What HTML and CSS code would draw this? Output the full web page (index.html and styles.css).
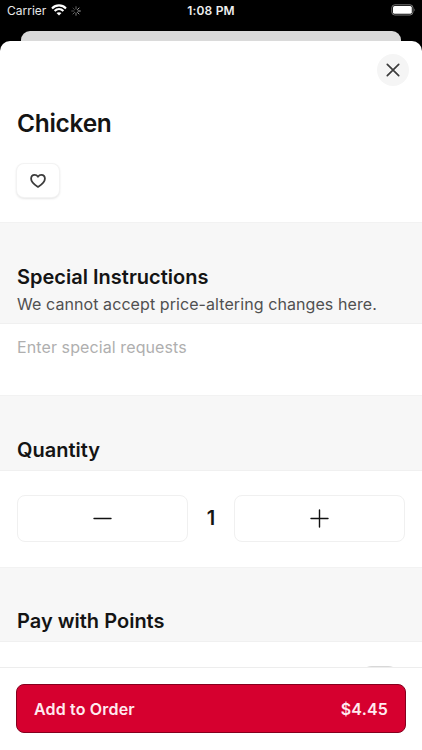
FILE: index.html
```html
<!DOCTYPE html>
<html lang="en">
<head>
<meta charset="utf-8">
<title>Chicken</title>
<link rel="stylesheet" href="styles.css">
</head>
<body>
<header class="status">
  <div class="status-left">
    <span class="carrier">Carrier</span>
    <svg class="wifi" width="16" height="12" viewBox="0 0 16 12" fill="none" stroke="#fff" stroke-width="2.1"><path d="M1 4.4C5 .4 11 .4 15 4.4M3.6 7C6.2 4.5 9.8 4.5 12.4 7"/><path d="M5.5 9.1C6.9 7.8 9.1 7.8 10.5 9.1L8 11.6Z" fill="#fff" stroke="none"/></svg>
    <svg class="spinner" width="10" height="10" viewBox="0 0 10 10" stroke="#fff" stroke-width=".9" stroke-linecap="round"><path d="M5 .7V3" opacity=".45"/><path d="M8 2 6.5 3.5" opacity=".7"/><path d="M9.3 5H7" opacity=".75"/><path d="M8 8 6.5 6.5" opacity=".65"/><path d="M5 9.3V7" opacity=".55"/><path d="M2 8 3.5 6.5" opacity=".45"/><path d="M.7 5H3" opacity=".35"/><path d="M2 2 3.5 3.5" opacity=".3"/></svg>
  </div>
  <time class="clock">1:08 PM</time>
  <svg class="battery" width="26" height="12" viewBox="0 0 26 12"><rect x=".8" y=".8" width="21.2" height="10.2" rx="3" fill="none" stroke="#777" stroke-width="1"/><rect x="2" y="2" width="18.8" height="7.8" rx="1.6" fill="#fff"/><path d="M23.3 4.2Q24.8 5.9 23.3 7.6Z" fill="#777"/></svg>
</header>
<div class="back-card"></div>
<main class="sheet">
  <section class="hero">
    <button class="close" aria-label="Close"><svg width="14" height="14" viewBox="0 0 14 14" fill="none" stroke="#3c3c3c" stroke-width="1.7" stroke-linecap="round"><path d="M1.3 1.3 12.7 12.7M12.7 1.3 1.3 12.7"/></svg></button>
    <h1 class="title">Chicken</h1>
    <button class="favorite" aria-label="Favorite"><svg width="16" height="15" viewBox="0 0 16 15" fill="none" stroke="#3c3c3c" stroke-width="1.8" stroke-linejoin="round"><path transform="translate(0 1)" d="M8 2.7C6.9 1.2 5.8.9 4.7.9 2.6.9 1.1 2.5 1.1 4.7 1.1 8 4.3 10.6 8 12.9 11.7 10.6 14.9 8 14.9 4.7 14.9 2.5 13.4.9 11.3.9 10.2.9 9.1 1.2 8 2.7Z"/></svg></button>
  </section>
  <section class="band instructions">
    <h2>Special Instructions</h2>
    <p class="note">We cannot accept price-altering changes here.</p>
  </section>
  <div class="request">Enter special requests</div>
  <section class="band quantity"><h2>Quantity</h2></section>
  <div class="stepper">
    <button class="step" aria-label="Decrease"><svg width="19" height="19" viewBox="0 0 19 19" stroke="#111" stroke-width="1.4" stroke-linecap="round"><path d="M1 9.5H18"/></svg></button>
    <span class="count">1</span>
    <button class="step" aria-label="Increase"><svg width="19" height="19" viewBox="0 0 19 19" stroke="#111" stroke-width="1.4" stroke-linecap="round"><path d="M1 9.5H18M9.5 1V18"/></svg></button>
  </div>
  <section class="band points"><h2>Pay with Points</h2></section>
  <div class="points-row"><span class="toggle"></span></div>
</main>
<footer class="footer">
  <button class="order"><span>Add to Order</span><span class="price">$4.45</span></button>
</footer>
</body>
</html>
```
FILE: styles.css
```css
* { box-sizing: border-box; }
body {
  margin: 0;
  height: 750px;
  overflow: hidden;
  display: flex;
  flex-direction: column;
  background: #000;
  color: #141414;
  font-family: Inter, "Liberation Sans", sans-serif;
}
button { font: inherit; color: inherit; padding: 0; border: 0; }
svg { display: block; flex: none; }
h1, h2, p { margin: 0; }
.status {
  height: 31px;
  flex: none;
  display: grid;
  grid-template-columns: 1fr auto 1fr;
  align-items: start;
  padding: 4px 5px 0 7px;
  color: #fff;
  font-size: 12px;
  line-height: 14px;
}
.status-left { display: flex; }
.carrier { width: 40px; color: #e8e8e8; }
.wifi { margin: 0 0 0 4px; }
.spinner { margin: 2px 0 0 4px; }
.clock { margin-right: 2px; font-weight: 600; letter-spacing: 0.2px; color: #eee; }
.battery { justify-self: end; }
.back-card {
  height: 10px;
  flex: none;
  margin: 0 21px;
  border-radius: 9px 9px 0 0;
  background: #dadada;
}
.sheet {
  height: 626px;
  flex: none;
  overflow: hidden;
  border-radius: 10px 10px 0 0;
  background: #fff;
}
.hero {
  height: 181px;
  padding: 12.6px 13px 0 17px;
  display: flex;
  flex-direction: column;
}
.close {
  width: 32px;
  height: 32px;
  align-self: flex-end;
  display: grid;
  place-items: center;
  border-radius: 50%;
  background: #f5f5f5;
}
.title {
  margin-top: 21.4px;
  font-size: 24.5px;
  line-height: 32px;
  font-weight: 600;
  letter-spacing: -0.3px;
}
.favorite {
  width: 42px;
  height: 33px;
  margin-top: 25px;
  display: grid;
  place-items: center;
  border-radius: 7px;
  background: #fff;
  box-shadow: 0 0 0 1px #f3f3f3, 0 1px 3px rgba(0, 0, 0, 0.2);
}
.band {
  padding: 0 17px;
  border-top: 1px solid #f2f2f2;
  border-bottom: 1px solid #f0f0f0;
  background: #f7f7f7;
}
h2 { font-size: 20px; line-height: 26px; font-weight: 600; letter-spacing: 0.01px; }
.instructions { height: 102px; padding-top: 41px; }
.note { margin-top: 3px; font-size: 16px; line-height: 22px; color: #505050; letter-spacing: 0.08px; white-space: nowrap; }
.request { height: 71px; padding: 12px 17px 0; font-size: 16px; line-height: 22px; letter-spacing: 0.1px; color: #afafaf; }
.quantity { height: 76px; padding-top: 41px; }
.stepper { height: 96px; padding: 0 17px 2px; display: flex; align-items: center; }
.step {
  height: 47px;
  flex: 1;
  display: grid;
  place-items: center;
  border: 1px solid #f0f0f0;
  border-radius: 8px;
  background: #fff;
}
.count { width: 46px; text-align: center; font-size: 20px; font-weight: 600; line-height: 26px; }
.points { height: 75px; padding-top: 40px; }
.points-row { height: 40px; padding: 24px 21px 0; display: flex; justify-content: flex-end; }
.toggle { width: 42px; height: 26px; border-radius: 13px; background: #d8d8d8; }
.footer {
  height: 83px;
  flex: none;
  padding: 16px 16px 0;
  border-top: 1px solid #ededed;
  background: #fff;
}
.order {
  width: 100%;
  height: 49px;
  padding: 0 17px;
  display: flex;
  align-items: center;
  justify-content: space-between;
  border: 1px solid #85001e;
  border-radius: 8px;
  background: #d6002f;
  color: #ffeaf0;
  font-size: 16px;
  font-weight: 600;
  letter-spacing: 0.17px;
}
```
